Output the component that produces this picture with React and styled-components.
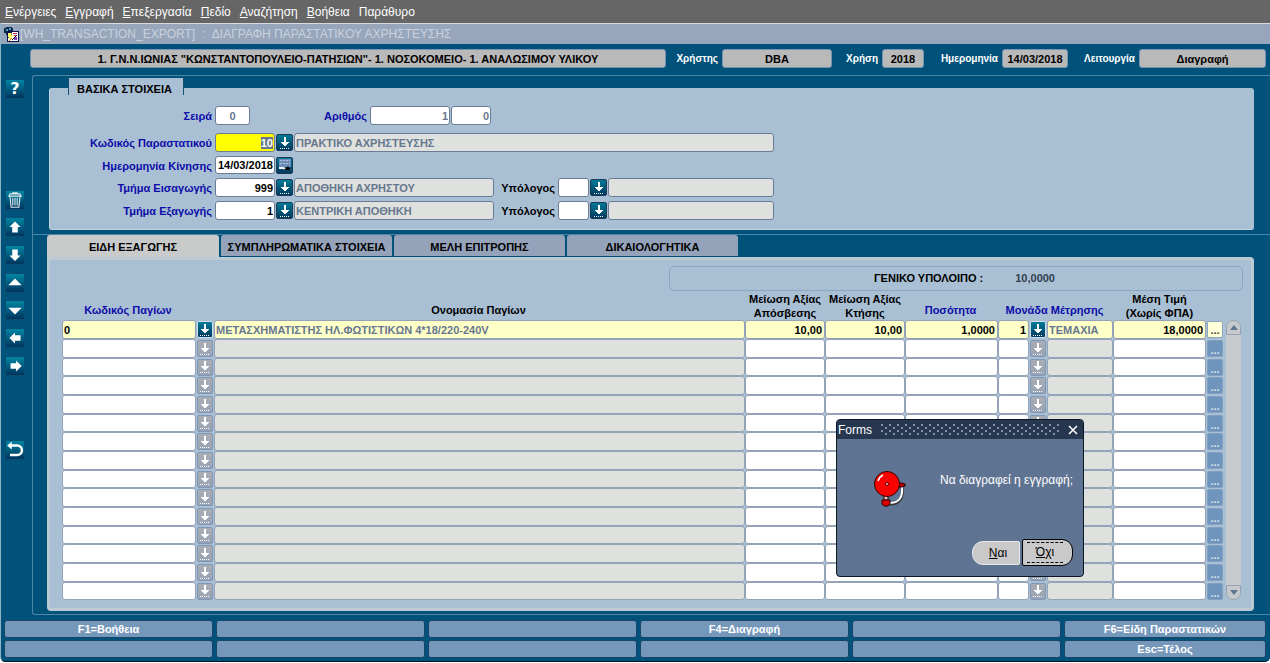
import React, { useEffect, useRef } from "react";
import styled, { createGlobalStyle, css } from "styled-components";

const MENU = ["Ενέργειες", "Εγγραφή", "Επεξεργασία", "Πεδίο", "Αναζήτηση", "Βοήθεια", "Παράθυρο"];

const TABS = ["ΕΙΔΗ ΕΞΑΓΩΓΗΣ", "ΣΥΜΠΛΗΡΩΜΑΤΙΚΑ ΣΤΟΙΧΕΙΑ", "ΜΕΛΗ ΕΠΙΤΡΟΠΗΣ", "ΔΙΚΑΙΟΛΟΓΗΤΙΚΑ"];

const FUNCTION_KEYS = [
	"F1=Βοήθεια", "", "", "F4=Διαγραφή", "", "F6=Είδη Παραστατικών",
	"", "", "", "", "", "Esc=Τέλος",
];

const FIRST_ROW = {
	code: "0",
	name: "ΜΕΤΑΣΧΗΜΑΤΙΣΤΗΣ ΗΛ.ΦΩΤΙΣΤΙΚΩΝ 4*18/220-240V",
	depreciation: "10,00",
	acquisition: "10,00",
	quantity: "1,0000",
	unit: "1",
	unitName: "ΤΕΜΑΧΙΑ",
	price: "18,0000",
};

const ROWS = [FIRST_ROW, ...Array.from({ length: 14 }, () => ({}))];

const COLUMNS = [134, 18, null, 80, 80, 93, 31, 18, 66, 93, 18];

function AppIcon() {
	return (
		<svg width="17" height="17" viewBox="0 0 17 17" aria-hidden="true">
			<path d="M1 2h2V1h6v1h1v5H8v2H3V7H1z" fill="#0b2a4a" />
			<path d="M3 3h2v2H3zM6 2h2v2H6z" fill="#4fa3c7" />
			<rect x="4" y="5" width="12" height="11" fill="#111150" />
			<path d="M9 6h6v9H5v-3l4-3z" fill="#fff" />
			<path d="M5 7h4l-1 2h3l-5 5v-3H5z" fill="#ffff66" />
			<path d="M10 7.5h4M11 9.500h3" stroke="#d02060" />
			<path d="M11 11h3v3h-3z" fill="#8040c0" />
			<path d="M6 15l3-3" stroke="#e07020" />
			<path d="M9 14l5-5" stroke="#111" />
		</svg>
	);
}

function LovIcon() {
	return (
		<svg width="16" height="16" viewBox="0 0 16 16" aria-hidden="true" shapeRendering="crispEdges">
			<path d="M7 2h2v5h3v1h-1v1h-1v1H9v1H7v-1H6V9H5V8H4V7h3z" fill="#fff" />
			<path d="M3 13.500h10" stroke="#fff" strokeDasharray="1 1" />
		</svg>
	);
}

function CalendarIcon() {
	return (
		<svg width="16" height="16" viewBox="0 0 16 16" aria-hidden="true">
			<rect x="2" y="2" width="12" height="8" fill="#6f8db8" />
			<path d="M3 3.500h10M3 6.500h10" stroke="#a9c0de" strokeDasharray="2 1" />
			<path d="M2 10h5l2 2h5v1H8l-2-1H2z" fill="#f2f2ea" />
			<path d="M7 13l4-4 3 4z" fill="#0a0a0a" />
		</svg>
	);
}

const TOOL_SHAPES = {
	trash: (
		<g fill="none" stroke="#dfe9ee" strokeWidth="1">
			<path d="M8 4.500v-1h4v1M5.500 4.500h9l1 2h-11zM5.500 7l1 9.500h7l1-9.500" />
			<path d="M8 8v7M10 8v7M12 8v7" />
		</g>
	),
	up: <path d="M10 5l5 5h-2.500v5h-5v-5H5z" fill="#fff" />,
	down: <path d="M10 15.500l-5-5h2.500V5h5v5.500H15z" fill="#fff" />,
	first: <path d="M10 6l6 6H4z" fill="#fff" />,
	last: <path d="M10 14l6-6H4z" fill="#fff" />,
	left: <path d="M5 10l5-5v2.500h5v5h-5V15z" fill="#fff" />,
	right: <path d="M16 10l-5-5v2.500H6v5h5V15z" fill="#fff" />,
	exit: (
		<g>
			<path d="M6 6h6a4 4 0 0 1 0 8.500H5.500" fill="none" stroke="#fff" strokeWidth="2.200" />
			<path d="M3 6l4-3.500v7z" fill="#fff" />
		</g>
	),
};

function Tool({ name, label, space }) {
	return (
		<ToolButton type="button" aria-label={label} $space={space}>
			{name === "help" ? "?" : (
				<svg width="20" height="20" viewBox="1 1 18 18" aria-hidden="true">
					{TOOL_SHAPES[name]}
				</svg>
			)}
		</ToolButton>
	);
}

function BellIcon() {
	return (
		<svg width="34" height="38" viewBox="0 0 34 38" aria-hidden="true">
			<path d="M29 17c2 10-3 18-12 17" fill="none" stroke="#3c3c3c" strokeWidth="3" />
			<path d="M29 17c1 10-3 16-12 16" fill="none" stroke="#fff" strokeWidth="2" />
			<path d="M25 13h4l3 1v2l-3 1h-4z" fill="#c00000" stroke="#200" />
			<path d="M11 25h4v5h-4z" fill="#f5c0c0" stroke="#200" />
			<circle cx="14" cy="14" r="12.500" fill="#fb0000" stroke="#300000" />
			<path d="M5 11c1-3 3-5 5-6" fill="none" stroke="#fff" strokeWidth="1.500" />
			<circle cx="14" cy="14" r="1.500" fill="#fcc" stroke="#500" />
			<path d="M9 30h8v4l-2 2h-4l-2-2z" fill="#e00000" stroke="#200" />
		</svg>
	);
}

function Lov({ label, muted }) {
	return (
		<LovButton type="button" aria-label={label} $muted={muted}>
			<LovIcon />
		</LovButton>
	);
}

function ItemRow({ item, active, index }) {
	const cell = (key, opts = {}) => (
		<td>
			<CellInput
				aria-label={`${key} ${index + 1}`}
				defaultValue={item[key]}
				readOnly={opts.readOnly}
				$active={active}
				$muted={opts.readOnly}
				$align={opts.align}
			/>
		</td>
	);
	return (
		<tr>
			{cell("code")}
			<td><Lov label="Λίστα παγίων" muted={!active} /></td>
			{cell("name", { readOnly: true })}
			{cell("depreciation", { align: "right" })}
			{cell("acquisition", { align: "right" })}
			{cell("quantity", { align: "right" })}
			{cell("unit", { align: "right" })}
			<td><Lov label="Λίστα μονάδων" muted={!active} /></td>
			{cell("unitName", { readOnly: true })}
			{cell("price", { align: "right" })}
			<td><MoreButton type="button" $active={active}>...</MoreButton></td>
		</tr>
	);
}

export default function App() {
	const docCode = useRef(null);

	useEffect(() => {
		docCode.current.focus();
		docCode.current.select();
	}, []);

	return (
		<Page>
			<GlobalStyle />
			<MenuBar>
				{MENU.map((item) => (
					<MenuItem key={item} type="button" $plain={item === "Παράθυρο"}>{item}</MenuItem>
				))}
			</MenuBar>
			<Window>
				<TitleBar>
					<AppIcon />
					<span>[WH_TRANSACTION_EXPORT] &nbsp;: &nbsp;ΔΙΑΓΡΑΦΗ ΠΑΡΑΣΤΑΤΙΚΟΥ ΑΧΡΗΣΤΕΥΣΗΣ</span>
				</TitleBar>

				<InfoBar>
					<InfoBox $grow>1. Γ.Ν.Ν.ΙΩΝΙΑΣ "ΚΩΝΣΤΑΝΤΟΠΟΥΛΕΙΟ-ΠΑΤΗΣΙΩΝ"- 1. ΝΟΣΟΚΟΜΕΙΟ- 1. ΑΝΑΛΩΣΙΜΟΥ ΥΛΙΚΟΥ</InfoBox>
					<InfoLabel $width={56}>Χρήστης</InfoLabel>
					<InfoBox $width={110}>DBA</InfoBox>
					<InfoLabel $width={50}>Χρήση</InfoLabel>
					<InfoBox $width={42}>2018</InfoBox>
					<InfoLabel $width={78}>Ημερομηνία</InfoLabel>
					<InfoBox $width={66}>14/03/2018</InfoBox>
					<InfoLabel $width={71}>Λειτουργία</InfoLabel>
					<InfoBox $width={127}>Διαγραφή</InfoBox>
				</InfoBar>

				<Body>
					<Toolbar>
						<Tool name="help" label="Βοήθεια" space={4} />
						<Tool name="trash" label="Διαγραφή εγγραφής" space={91} />
						<Tool name="up" label="Προηγούμενη" space={7} />
						<Tool name="down" label="Επόμενη" space={8} />
						<Tool name="first" label="Πρώτη" space={8} />
						<Tool name="last" label="Τελευταία" space={7} />
						<Tool name="left" label="Προηγούμενο μπλοκ" space={8} />
						<Tool name="right" label="Επόμενο μπλοκ" space={8} />
						<Tool name="exit" label="Έξοδος" space={64} />
					</Toolbar>

					<Canvas>
						<HeaderSection>
							<Legend>ΒΑΣΙΚΑ ΣΤΟΙΧΕΙΑ</Legend>
							<Group>
								<FormRow $space>
									<FieldLabel htmlFor="series">Σειρά</FieldLabel>
									<Field id="series" $width={35} $align="center" $dim defaultValue="0" />
									<FieldLabel htmlFor="number" $width={118}>Αριθμός</FieldLabel>
									<Field id="number" $width={80} $align="right" $dim defaultValue="1" />
									<Field aria-label="Αριθμός 2" $width={40} $align="right" $dim defaultValue="0" />
								</FormRow>
								<FormRow>
									<FieldLabel htmlFor="doc">Κωδικός Παραστατικού</FieldLabel>
									<Field id="doc" ref={docCode} $width={60} $align="right" $current defaultValue="10" />
									<Lov label="Λίστα παραστατικών" />
									<Field aria-label="Παραστατικό" readOnly $width={480} $muted defaultValue="ΠΡΑΚΤΙΚΟ ΑΧΡΗΣΤΕΥΣΗΣ" />
								</FormRow>
								<FormRow $short>
									<FieldLabel htmlFor="date">Ημερομηνία Κίνησης</FieldLabel>
									<Field id="date" $width={60} $align="right" defaultValue="14/03/2018" />
									<LovButton type="button" aria-label="Ημερολόγιο"><CalendarIcon /></LovButton>
								</FormRow>
								<FormRow>
									<FieldLabel htmlFor="in">Τμήμα Εισαγωγής</FieldLabel>
									<Field id="in" $width={60} $align="right" defaultValue="999" />
									<Lov label="Λίστα τμημάτων" />
									<Field aria-label="Τμήμα" readOnly $width={200} $muted defaultValue="ΑΠΟΘΗΚΗ ΑΧΡΗΣΤΟΥ" />
									<FieldLabel htmlFor="in-owner" $width={62} $black>Υπόλογος</FieldLabel>
									<Field id="in-owner" $width={31} />
									<Lov label="Λίστα υπολόγων" />
									<Field aria-label="Όνομα υπολόγου" readOnly $width={166} $muted />
								</FormRow>
								<FormRow>
									<FieldLabel htmlFor="out">Τμήμα Εξαγωγής</FieldLabel>
									<Field id="out" $width={60} $align="right" defaultValue="1" />
									<Lov label="Λίστα τμημάτων" />
									<Field aria-label="Τμήμα" readOnly $width={200} $muted defaultValue="ΚΕΝΤΡΙΚΗ ΑΠΟΘΗΚΗ" />
									<FieldLabel htmlFor="out-owner" $width={62} $black>Υπόλογος</FieldLabel>
									<Field id="out-owner" $width={31} />
									<Lov label="Λίστα υπολόγων" />
									<Field aria-label="Όνομα υπολόγου" readOnly $width={166} $muted />
								</FormRow>
							</Group>
						</HeaderSection>

						<DetailSection>
							<TabList role="tablist">
								{TABS.map((tab, i) => (
									<Tab key={tab} type="button" role="tab" aria-selected={i === 0} $active={i === 0}>{tab}</Tab>
								))}
							</TabList>
							<TabPanel role="tabpanel">
								<Balance>
									<span>ΓΕΝΙΚΟ ΥΠΟΛΟΙΠΟ :</span>
									<output>10,0000</output>
								</Balance>
								<GridArea>
									<Items>
										<colgroup>
											{COLUMNS.map((width, i) => <col key={i} width={width ?? undefined} />)}
										</colgroup>
										<thead>
											<tr>
												<HeadCell $blue>Κωδικός Παγίων</HeadCell>
												<HeadCell />
												<HeadCell>Ονομασία Παγίων</HeadCell>
												<HeadCell $double>Μείωση Αξίας<br />Απόσβεσης</HeadCell>
												<HeadCell $double>Μείωση Αξίας<br />Κτήσης</HeadCell>
												<HeadCell $blue>Ποσότητα</HeadCell>
												<HeadCell $blue colSpan={3}>Μονάδα Μέτρησης</HeadCell>
												<HeadCell $double>Μέση Τιμή<br />(Χωρίς ΦΠΑ)</HeadCell>
												<HeadCell />
											</tr>
										</thead>
										<tbody>
											{ROWS.map((item, i) => (
												<ItemRow key={i} item={item} index={i} active={i === 0} />
											))}
										</tbody>
									</Items>
									<Scrollbar>
										<ScrollButton type="button" aria-label="Πάνω" $up>
											<svg width="8" height="5" viewBox="0 0 8 5"><path d="M4 0l4 5H0z" fill="#5f7390" /></svg>
										</ScrollButton>
										<ScrollButton type="button" aria-label="Κάτω">
											<svg width="8" height="5" viewBox="0 0 8 5"><path d="M4 5L0 0h8z" fill="#5f7390" /></svg>
										</ScrollButton>
									</Scrollbar>
								</GridArea>
							</TabPanel>
						</DetailSection>
					</Canvas>
				</Body>

				<KeyBar>
					{FUNCTION_KEYS.map((label, i) => (
						<KeyButton key={i} type="button">{label}</KeyButton>
					))}
				</KeyBar>
			</Window>

			<Dialog role="alertdialog" aria-labelledby="dialog-title" aria-describedby="dialog-text">
				<DialogTitle>
					<span id="dialog-title">Forms</span>
					<Grip />
					<CloseButton type="button" aria-label="Κλείσιμο">
						<svg width="10" height="10" viewBox="0 0 10 10"><path d="M1 1l8 8M9 1L1 9" stroke="#fff" strokeWidth="1.600" /></svg>
					</CloseButton>
				</DialogTitle>
				<DialogContent>
					<BellIcon />
					<p id="dialog-text">Να διαγραφεί η εγγραφή;</p>
				</DialogContent>
				<DialogActions>
					<DialogButton type="button" $side="left"><u>Ν</u>αι</DialogButton>
					<DialogButton type="button" $side="right"><span><u>Ό</u>χι</span></DialogButton>
				</DialogActions>
			</Dialog>
		</Page>
	);
}

const GlobalStyle = createGlobalStyle`
	* {
		box-sizing: border-box;
	}
	body {
		margin: 0;
		background: #fff;
	}
	button, input {
		margin: 0;
		padding: 0;
		font: inherit;
		border-radius: 0;
	}
	svg {
		display: block;
		flex: none;
	}
`;

const Page = styled.div`
	position: relative;
	min-width: 1100px;
	font-family: "Liberation Sans", Arial, sans-serif;
	font-size: 11px;
	font-weight: bold;
	line-height: 14px;
	color: #000;
`;

const MenuBar = styled.nav`
	display: flex;
	gap: 9px;
	height: 23px;
	padding: 1px 5px 0;
	background: #666;
`;

const MenuItem = styled.button`
	border: 0;
	background: none;
	color: #fff;
	font-size: 12px;
	font-weight: normal;

	&::first-letter {
		text-decoration: ${(p) => (p.$plain ? "none" : "underline")};
	}
`;

const Window = styled.main`
	background: #00527a;
	border-left: 1px solid #8fb3c6;
	border-bottom: 1px solid #001420;
	border-radius: 0 0 5px 5px;
`;

const TitleBar = styled.header`
	display: flex;
	align-items: center;
	height: 21px;
	padding-left: 2px;
	border-top: 1px solid #d5dce4;
	background: #97a6bb;
	color: #c9d2de;
	font-size: 12px;
	font-weight: normal;
`;

const InfoBar = styled.div`
	display: flex;
	padding: 5px 4px 0 29px;
`;

const InfoBox = styled.div`
	flex: ${(p) => (p.$grow ? "1" : "none")};
	width: ${(p) => (p.$width ? `${p.$width}px` : "auto")};
	height: 19px;
	border: 1px solid #7793b4;
	border-radius: 3px;
	background: #b9b9b9;
	line-height: 18px;
	text-align: center;
	white-space: nowrap;
`;

const InfoLabel = styled.div`
	flex: none;
	width: ${(p) => p.$width}px;
	padding-right: 4px;
	color: #fff;
	font-size: 10px;
	line-height: 19px;
	text-align: right;
`;

const Body = styled.div`
	display: flex;
	padding-top: 7px;
`;

const Toolbar = styled.div`
	flex: none;
	width: 31px;
	padding-left: 4px;
`;

const ToolButton = styled.button`
	display: flex;
	align-items: center;
	justify-content: center;
	width: 20px;
	height: 20px;
	margin-top: ${(p) => p.$space}px;
	border: 0;
	background: linear-gradient(#008aa6, #00305a);
	box-shadow: inset 0 0 0 1px #0a4f72;
	color: #fff;
	font-family: "DejaVu Sans", sans-serif;
	font-size: 16px;
	line-height: 20px;
`;

const Canvas = styled.div`
	flex: 1;
	min-width: 0;
	border: solid #4f86a8;
	border-width: 1px 0 1px 1px;
	border-radius: 3px 0 0 3px;
`;

const HeaderSection = styled.section`
	padding: 2px 16px 4px;
	border-bottom: 1px solid #4f86a8;
`;

const Legend = styled.h2`
	width: 116px;
	height: 17px;
	margin: 0 0 -7px 19px;
	padding: 4px 0 0 8px;
	position: relative;
	border: solid #14506f;
	border-width: 0 1px;
	background: #a9bfd3;
	font-size: 11px;
	line-height: 14px;
`;

const Group = styled.div`
	display: flex;
	flex-direction: column;
	gap: 4px;
	padding: 18px 0 9px;
	border: solid #c3d2de;
	border-width: 0 0 1px 1px;
	border-radius: 3px;
	background: #a9bfd3;
`;

const FormRow = styled.div`
	display: flex;
	gap: 1px;
	height: ${(p) => (p.$short ? 18 : 19)}px;
	margin-bottom: ${(p) => (p.$space ? 4 : 0)}px;
`;

const FieldLabel = styled.label`
	flex: none;
	width: ${(p) => p.$width || 164}px;
	padding-right: 2px;
	color: ${(p) => (p.$black ? "#000" : "#0c0ca8")};
	line-height: 20px;
	text-align: right;
	white-space: nowrap;
`;

const Field = styled.input`
	width: ${(p) => p.$width}px;
	height: 100%;
	padding: 0 1px;
	border: 1px solid #6d7c96;
	border-radius: 3px;
	outline: 0;
	background: #fff;
	color: ${(p) => (p.$dim || p.$muted ? "#67778f" : "#000")};
	text-align: ${(p) => p.$align || "left"};

	${(p) => p.$muted && css`
		background: #dee1de;
	`}

	${(p) => p.$current && css`
		background: #ff0;

		&::selection {
			background: #66758c;
			color: #fff;
		}
	`}
`;

const LovButton = styled.button`
	display: flex;
	flex: none;
	align-items: center;
	justify-content: center;
	width: 17px;
	height: 17px;
	align-self: center;
	border: 1px solid #1d3a55;
	border-radius: 2px;
	background: linear-gradient(#007a96, #003a60);
	overflow: hidden;

	td & {
		width: 16px;
		height: 17px;
		margin: 0 auto;
		border-color: ${(p) => (p.$muted ? "#7f98b8" : "#cfe0ea")};
	}

	${(p) => p.$muted && css`
		background: linear-gradient(#a9adb4, #99a3b4);
	`}
`;

const DetailSection = styled.section`
	padding: 0 16px 3px 14px;
`;

const TabList = styled.div`
	display: flex;
	gap: 2px;
	align-items: flex-start;
	height: 22px;
`;

const Tab = styled.button`
	width: ${(p) => (p.$active ? 172 : 171)}px;
	height: ${(p) => (p.$active ? 22 : 21)}px;
	border: 0;
	border-radius: 3px 3px 0 0;
	background: ${(p) => (p.$active ? "#c9caca" : "#94a3b9")};
	line-height: 24px;
	text-align: center;
	white-space: nowrap;
`;

const TabPanel = styled.div`
	padding: 6px 8px 8px 12px;
	border: 3px solid #bccad4;
	border-radius: 0 4px 4px 4px;
	background: #a9bfd3;
`;

const Balance = styled.div`
	display: flex;
	gap: 32px;
	width: 574px;
	height: 25px;
	margin-left: auto;
	padding-left: 204px;
	border: 1px solid #8ca5c1;
	border-radius: 5px;
	line-height: 22px;

	output {
		color: #333f4f;
	}
`;

const GridArea = styled.div`
	display: flex;
	align-items: flex-end;
	gap: 2px;
	padding-right: 2px;
`;

const Items = styled.table`
	flex: 1;
	min-width: 0;
	table-layout: fixed;
	border-collapse: collapse;

	td {
		height: 19px;
		padding: 0;
		vertical-align: middle;
	}

	tr:nth-child(3n) td {
		height: 18px;
	}
`;

const HeadCell = styled.th`
	height: 29px;
	padding: ${(p) => (p.$double ? "0" : "0 2px 2px 0")};
	color: ${(p) => (p.$blue ? "#0c0ca8" : "#000")};
	line-height: 15px;
	vertical-align: bottom;
	white-space: nowrap;

	${(p) => p.$double && css`
		line-height: 14px;
	`}
`;

const CellInput = styled.input`
	display: block;
	width: 100%;
	height: 100%;
	padding: 0 2px 0 1px;
	border: 1px solid #95a3b8;
	border-radius: 3px;
	outline: 0;
	background: ${(p) => (p.$active ? "#ffffc8" : p.$muted ? "#dee1de" : "#fff")};
	color: ${(p) => (p.$muted ? "#67778f" : "#000")};
	text-align: ${(p) => p.$align || "left"};
`;

const MoreButton = styled.button`
	display: block;
	width: 16px;
	height: 17px;
	margin: 0 auto;
	border: 1px solid ${(p) => (p.$active ? "#8fa6bf" : "#83a0c0")};
	border-radius: 2px;
	background: ${(p) => (p.$active ? "#ffffd8" : "#6f95bc")};
	color: ${(p) => (p.$active ? "#444" : "#dbe6f1")};
	line-height: ${(p) => (p.$active ? 16 : 19)}px;
`;

const Scrollbar = styled.div`
	display: flex;
	flex: none;
	flex-direction: column;
	justify-content: space-between;
	width: 15px;
	height: 280px;
	border-radius: 7px;
	background: #c6cacd;
`;

const ScrollButton = styled.button`
	display: flex;
	align-items: center;
	justify-content: center;
	width: 15px;
	height: 15px;
	border: 1px solid #96a3b3;
	border-radius: ${(p) => (p.$up ? "7px 7px 0 0" : "0 0 7px 7px")};
	background: #c6cacd;
`;

const KeyBar = styled.footer`
	display: grid;
	grid-template-columns: repeat(5, 209fr) 202fr;
	gap: 2px 3px;
	padding: 5px 4px 3px 3px;
`;

const KeyButton = styled.button`
	height: 18px;
	border: 1px solid #17456a;
	border-radius: 3px;
	background: #7597ba;
	color: #fff;
	line-height: 16px;
`;

const Dialog = styled.div`
	position: absolute;
	top: 419px;
	right: 186px;
	width: 248px;
	height: 158px;
	border: 1px solid #0d1626;
	border-radius: 4px;
	background: #5f7492;
	color: #fff;
	font-size: 12px;
	font-weight: normal;
	overflow: hidden;
`;

const DialogTitle = styled.div`
	display: flex;
	gap: 9px;
	align-items: center;
	height: 19px;
	padding: 0 5px 0 1px;
	background: #26374f;
`;

const Grip = styled.div`
	flex: 1;
	height: 11px;
	background-image: radial-gradient(circle at 1px 1px, #7f90a8 1px, transparent 1px),
		radial-gradient(circle at 5px 4px, #7f90a8 1px, transparent 1px);
	background-size: 8px 6px;
`;

const CloseButton = styled.button`
	border: 0;
	background: none;
`;

const DialogContent = styled.div`
	display: flex;
	align-items: flex-start;
	justify-content: space-between;
	height: 100px;
	padding: 31px 10px 0 36px;

	p {
		margin: 3px 0 0;
	}
`;

const DialogActions = styled.div`
	display: flex;
	align-items: center;
	justify-content: flex-end;
	gap: 2px;
	padding-right: 10px;
`;

const DialogButton = styled.button`
	width: ${(p) => (p.$side === "left" ? 48 : 51)}px;
	height: ${(p) => (p.$side === "left" ? 24 : 27)}px;
	padding-left: ${(p) => (p.$side === "left" ? 4 : 0)}px;
	border: 1px solid ${(p) => (p.$side === "left" ? "#e8e8e8" : "#000")};
	border-radius: ${(p) => (p.$side === "left" ? "11px 2px 2px 11px" : "2px 11px 11px 2px")};
	background: #c9c9c9;
	color: #000;

	span {
		display: block;
		margin: 0 9px 0 4px;
		border: dashed #000;
		border-width: 1px 0;
		line-height: 19px;
	}
`;
